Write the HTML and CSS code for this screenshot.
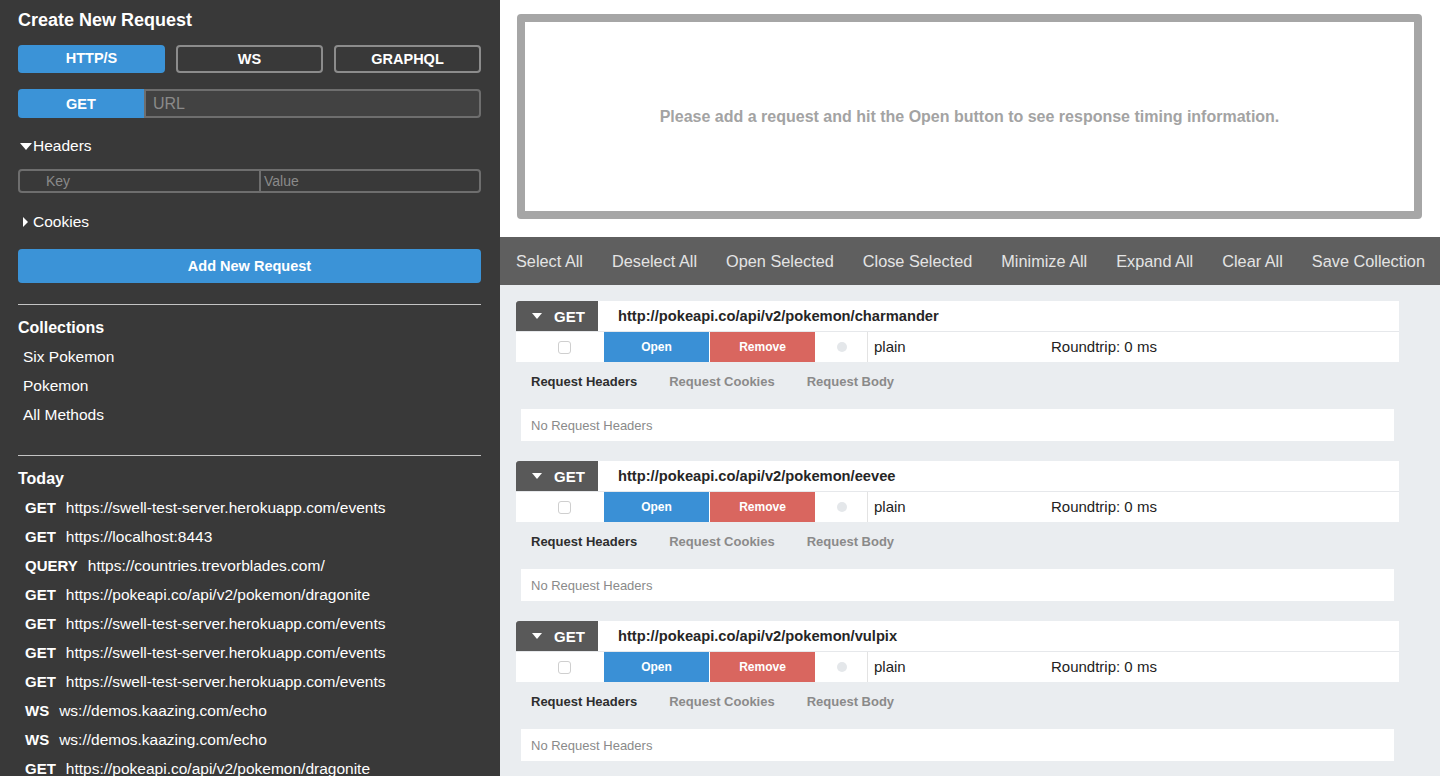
FILE: index.html
```html
<!DOCTYPE html>
<html>
<head>
<meta charset="utf-8">
<link rel="stylesheet" href="styles.css">
</head>
<body>
<div class="app">
  <aside class="sidebar">
    <h1 class="title">Create New Request</h1>
    <div class="protocols">
      <button class="proto active">HTTP/S</button>
      <button class="proto">WS</button>
      <button class="proto">GRAPHQL</button>
    </div>
    <div class="urlrow">
      <div class="method">GET</div>
      <div class="urlinput">URL</div>
    </div>
    <div class="toggle"><span class="tri-down"></span>Headers</div>
    <div class="kv">
      <div class="kv-key">Key</div>
      <div class="kv-val">Value</div>
    </div>
    <div class="toggle cookies"><span class="tri-right"></span>Cookies</div>
    <button class="addbtn">Add New Request</button>
    <div class="rule"></div>
    <h2 class="section">Collections</h2>
    <ul class="list">
      <li>Six Pokemon</li>
      <li>Pokemon</li>
      <li>All Methods</li>
    </ul>
    <div class="rule rule2"></div>
    <h2 class="section">Today</h2>
    <ul class="list history">
      <li><b>GET</b><span>https://swell-test-server.herokuapp.com/events</span></li>
      <li><b>GET</b><span>https://localhost:8443</span></li>
      <li><b>QUERY</b><span>https://countries.trevorblades.com/</span></li>
      <li><b>GET</b><span>https://pokeapi.co/api/v2/pokemon/dragonite</span></li>
      <li><b>GET</b><span>https://swell-test-server.herokuapp.com/events</span></li>
      <li><b>GET</b><span>https://swell-test-server.herokuapp.com/events</span></li>
      <li><b>GET</b><span>https://swell-test-server.herokuapp.com/events</span></li>
      <li><b>WS</b><span>ws://demos.kaazing.com/echo</span></li>
      <li><b>WS</b><span>ws://demos.kaazing.com/echo</span></li>
      <li><b>GET</b><span>https://pokeapi.co/api/v2/pokemon/dragonite</span></li>
    </ul>
  </aside>
  <main class="main">
    <section class="timing">
      <div class="timing-box">Please add a request and hit the Open button to see response timing information.</div>
    </section>
    <nav class="toolbar">
      <span>Select All</span>
      <span>Deselect All</span>
      <span>Open Selected</span>
      <span>Close Selected</span>
      <span>Minimize All</span>
      <span>Expand All</span>
      <span>Clear All</span>
      <span>Save Collection</span>
    </nav>
    <section class="content">
      <div class="card">
        <div class="card-head">
          <div class="badge"><span class="tri-down white"></span>GET</div>
          <div class="card-url">http://pokeapi.co/api/v2/pokemon/charmander</div>
        </div>
        <div class="card-row">
          <div class="cb-cell"><span class="cb"></span></div>
          <div class="btn open">Open</div>
          <div class="btn remove">Remove</div>
          <div class="dot-cell"><span class="dot"></span></div>
          <div class="plain">plain</div>
          <div class="rt">Roundtrip: 0 ms</div>
        </div>
        <div class="tabs">
          <span class="tab active">Request Headers</span>
          <span class="tab">Request Cookies</span>
          <span class="tab">Request Body</span>
        </div>
        <div class="empty">No Request Headers</div>
      </div>
      <div class="card">
        <div class="card-head">
          <div class="badge"><span class="tri-down white"></span>GET</div>
          <div class="card-url">http://pokeapi.co/api/v2/pokemon/eevee</div>
        </div>
        <div class="card-row">
          <div class="cb-cell"><span class="cb"></span></div>
          <div class="btn open">Open</div>
          <div class="btn remove">Remove</div>
          <div class="dot-cell"><span class="dot"></span></div>
          <div class="plain">plain</div>
          <div class="rt">Roundtrip: 0 ms</div>
        </div>
        <div class="tabs">
          <span class="tab active">Request Headers</span>
          <span class="tab">Request Cookies</span>
          <span class="tab">Request Body</span>
        </div>
        <div class="empty">No Request Headers</div>
      </div>
      <div class="card">
        <div class="card-head">
          <div class="badge"><span class="tri-down white"></span>GET</div>
          <div class="card-url">http://pokeapi.co/api/v2/pokemon/vulpix</div>
        </div>
        <div class="card-row">
          <div class="cb-cell"><span class="cb"></span></div>
          <div class="btn open">Open</div>
          <div class="btn remove">Remove</div>
          <div class="dot-cell"><span class="dot"></span></div>
          <div class="plain">plain</div>
          <div class="rt">Roundtrip: 0 ms</div>
        </div>
        <div class="tabs">
          <span class="tab active">Request Headers</span>
          <span class="tab">Request Cookies</span>
          <span class="tab">Request Body</span>
        </div>
        <div class="empty">No Request Headers</div>
      </div>
    </section>
  </main>
</div>
</body>
</html>
```
FILE: styles.css
```css
* { box-sizing: border-box; }
html, body { margin: 0; padding: 0; }
body {
  width: 1440px;
  height: 776px;
  overflow: hidden;
  font-family: "Liberation Sans", Arial, Helvetica, sans-serif;
}
.app { display: flex; height: 776px; }

/* Sidebar */
.sidebar {
  width: 500px;
  flex: none;
  background: #393939;
  color: #fff;
  padding: 9px 19px 0 18px;
  overflow: hidden;
}
.title { margin: 0; font-size: 18px; line-height: 22px; font-weight: bold; }
.protocols { display: flex; gap: 11px; margin-top: 14px; }
.proto {
  flex: 1;
  height: 28px;
  border: 2px solid #8c8c8c;
  border-radius: 4px;
  background: transparent;
  color: #fff;
  font-family: inherit;
  font-weight: bold;
  font-size: 14.5px;
  padding: 0;
}
.proto.active { background: #3b93d7; border-color: #3b93d7; padding-bottom: 2px; }
.urlrow { display: flex; margin-top: 16px; height: 29px; }
.method {
  width: 126px;
  background: #3b93d7;
  border-radius: 4px 0 0 4px;
  font-weight: bold;
  font-size: 14.5px;
  display: flex; align-items: center; justify-content: center;
}
.urlinput {
  flex: 1;
  border: 2px solid #6e6e6e;
  border-radius: 0 4px 4px 0;
  background: #424242;
  color: #8a8a8a;
  font-size: 16px;
  padding-left: 7px;
  display: flex; align-items: center;
}
.toggle {
  margin-top: 18px;
  height: 20px;
  display: flex; align-items: center;
  font-size: 15.5px;
  padding-left: 2px;
}
.tri-down {
  width: 0; height: 0;
  border-left: 6px solid transparent;
  border-right: 6px solid transparent;
  border-top: 7px solid #fff;
  margin-right: 1px;
}
.tri-right {
  width: 0; height: 0;
  border-top: 5px solid transparent;
  border-bottom: 5px solid transparent;
  border-left: 5px solid #fff;
  margin: 0 5px 0 3px;
}
.kv {
  display: flex;
  margin-top: 13px;
  height: 24px;
  border: 2px solid #6e6e6e;
  border-radius: 4px;
  color: #8a8a8a;
  font-size: 14px;
}
.kv-key { width: 241px; border-right: 2px solid #6e6e6e; padding-left: 26px; display: flex; align-items: center; }
.kv-val { flex: 1; padding-left: 3px; display: flex; align-items: center; }
.toggle.cookies { margin-top: 19px; }
.addbtn {
  display: block;
  width: 100%;
  margin-top: 17px;
  height: 34px;
  border: 0;
  border-radius: 4px;
  background: #3b93d7;
  color: #fff;
  font-family: inherit;
  font-weight: bold;
  font-size: 14.5px;
}
.rule { height: 1px; background: #c4c4c4; margin-top: 21px; }
.rule2 { margin-top: 26px; }
.section { margin: 13px 0 0; font-size: 16px; line-height: 20px; font-weight: bold; }
.list { list-style: none; margin: 4px 0 0; padding: 0 0 0 5px; font-size: 15.5px; line-height: 29px; }
.history { padding-left: 7px; white-space: nowrap; }
.history b { margin-right: 10px; font-size: 15px; }

/* Main */
.main { flex: 1; display: flex; flex-direction: column; min-width: 0; }
.timing { background: #fff; padding: 14px 18px 18px 17px; height: 237px; flex: none; }
.timing-box {
  height: 205px;
  border: 8px solid #a6a6a6;
  border-radius: 4px;
  display: flex; align-items: center; justify-content: center;
  color: #a3a3a3;
  font-weight: bold;
  font-size: 16px;
}
.toolbar {
  height: 48px;
  flex: none;
  background: #5f5f5f;
  display: flex; align-items: center;
  gap: 29px;
  padding-left: 16px;
  padding-top: 1px;
  color: #e4e4e4;
  font-size: 16.3px;
  white-space: nowrap;
}
.content {
  flex: 1;
  background: #eaedf0;
  padding: 16px 41px 0 16px;
  overflow: hidden;
}
.card { margin-bottom: 20px; }
.card-head { display: flex; height: 30px; background: #fff; border-bottom: 1px solid #e6e8eb; box-sizing: content-box; }
.badge {
  width: 82px;
  background: #595959;
  color: #fff;
  font-weight: bold;
  font-size: 15px;
  display: flex; align-items: center;
  padding-left: 16px;
  border-radius: 3px 0 0 0;
}
.badge .tri-down { border-left-width: 5px; border-right-width: 5px; border-top-width: 6px; margin-right: 12px; }
.card-url { padding-left: 20px; display: flex; align-items: center; font-size: 14.7px; font-weight: bold; color: #262626; }
.card-row { display: flex; height: 30px; background: #fff; align-items: stretch; font-size: 15px; color: #222; }
.cb-cell { width: 88px; display: flex; align-items: center; padding-left: 42px; }
.cb { width: 13px; height: 13px; border: 1px solid #cfcfcf; border-radius: 3px; }
.btn { width: 105px; color: #fff; font-weight: bold; font-size: 12px; display: flex; align-items: center; justify-content: center; }
.open { background: #3a90d6; }
.remove { background: #d9665f; margin-left: 1px; }
.dot-cell { width: 53px; border-right: 1px solid #e3e3e3; display: flex; align-items: center; padding-left: 22px; }
.dot { width: 10px; height: 10px; border-radius: 50%; background: #e4e7ea; }
.plain { width: 183px; padding-left: 6px; display: flex; align-items: center; padding-bottom: 1px; }
.rt { display: flex; align-items: center; padding-bottom: 1px; }
.tabs { height: 38px; display: flex; align-items: center; gap: 32px; padding-left: 15px; font-size: 13px; font-weight: bold; color: #8a8a8a; }
.tab.active { color: #2e2e2e; }
.empty {
  margin: 9px 5px 0;
  height: 32px;
  background: #fff;
  color: #8a8a8a;
  font-size: 13px;
  display: flex; align-items: center;
  padding-left: 10px;
}
```
